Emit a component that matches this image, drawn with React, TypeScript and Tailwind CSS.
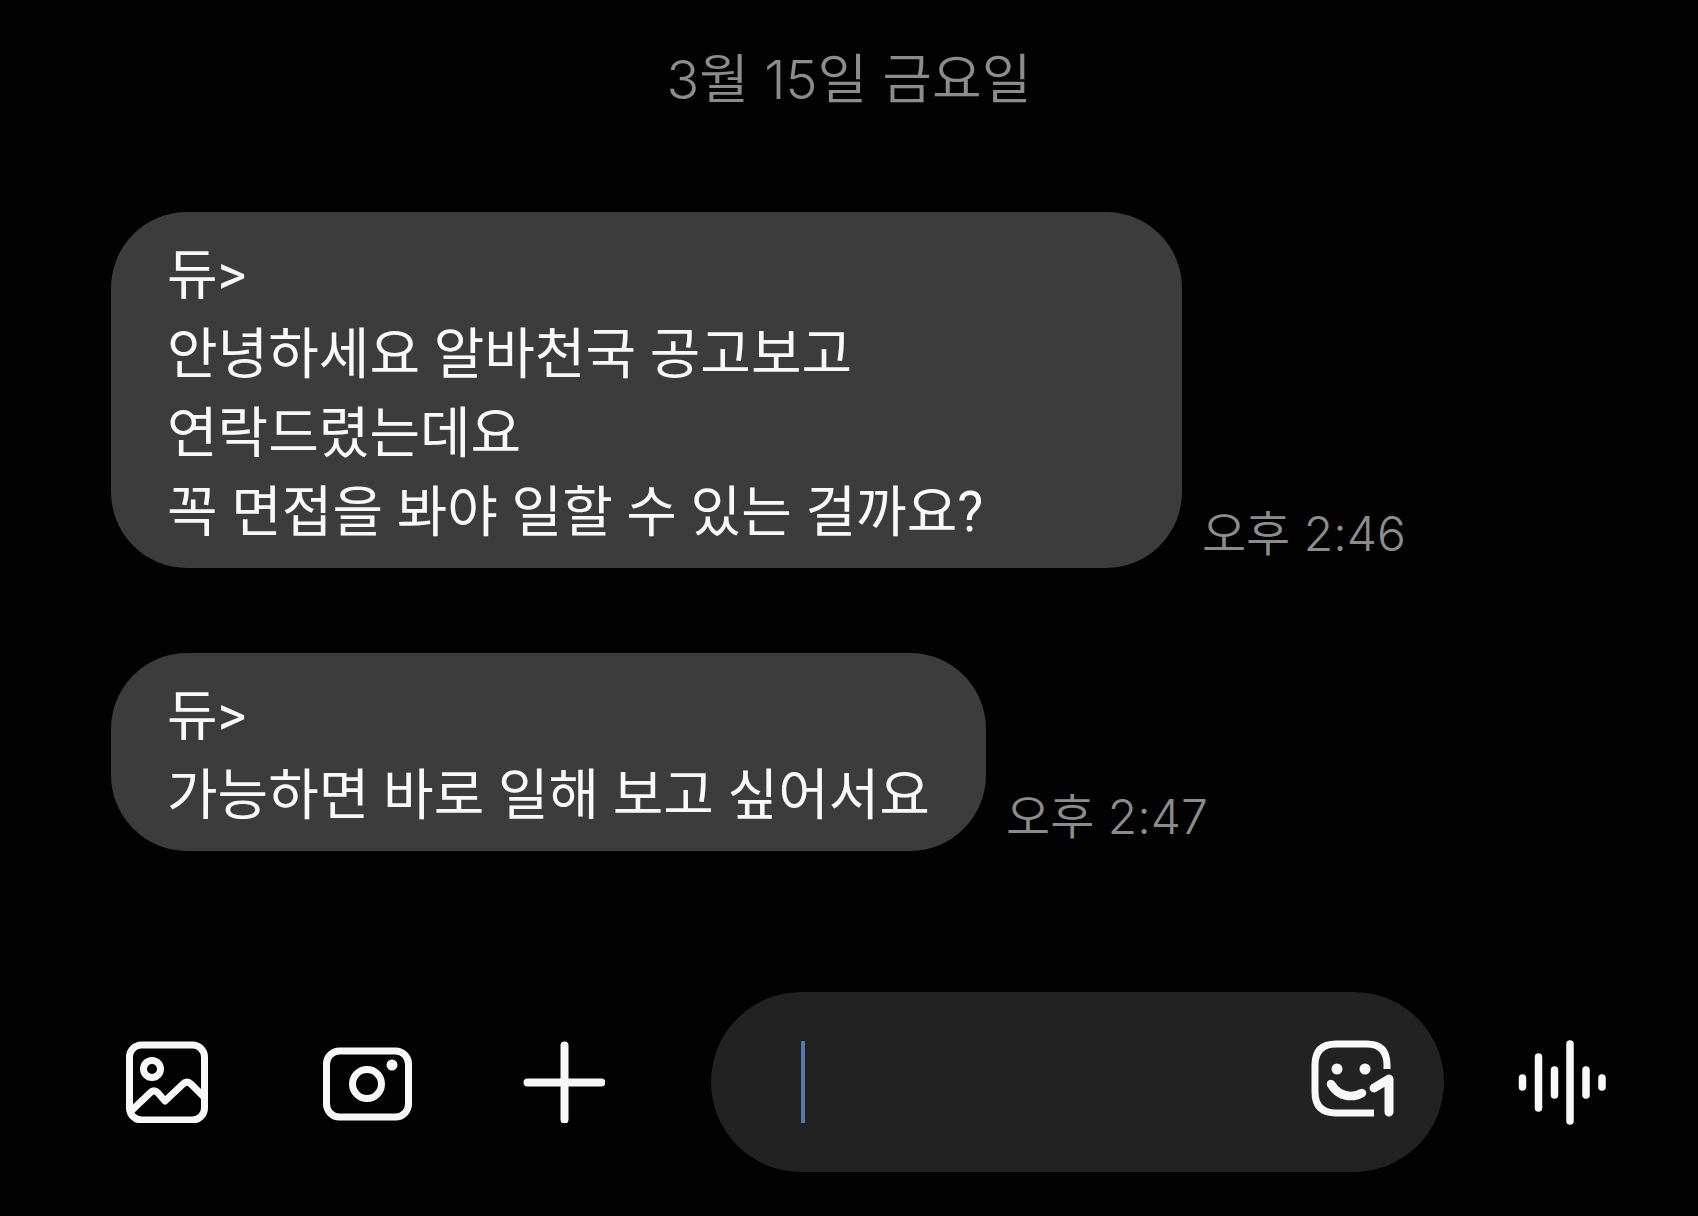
import { useState } from "react";

interface Message {
  id: number;
  lines: string[];
  time: string;
  bubbleClass: string;
}

const messages: Message[] = [
  {
    id: 1,
    lines: [
      "듀>",
      "안녕하세요 알바천국 공고보고",
      "연락드렸는데요",
      "꼭 면접을 봐야 일할 수 있는 걸까요?",
    ],
    time: "오후 2:46",
    bubbleClass: "w-[73%]",
  },
  {
    id: 2,
    lines: ["듀>", "가능하면 바로 일해 보고 싶어서요"],
    time: "오후 2:47",
    bubbleClass: "w-fit",
  },
];

function GalleryIcon() {
  return (
    <svg width="82" height="82" viewBox="0 0 82 82" fill="none" stroke="currentColor" strokeWidth="7">
      <rect x="3.5" y="4" width="75" height="75" rx="12" />
      <circle cx="26" cy="28" r="8.5" />
      <path d="M4 71 24 52q4-4 8 0l7 8 18-17q4-4 8 0l14 14" strokeLinejoin="round" />
    </svg>
  );
}

function CameraIcon() {
  return (
    <svg width="90" height="82" viewBox="0 0 90 82" fill="none" stroke="currentColor" strokeWidth="7">
      <rect x="4.5" y="10" width="82" height="66" rx="13" />
      <circle cx="45" cy="43" r="14.5" />
      <circle cx="70" cy="24" r="5.5" fill="currentColor" stroke="none" />
    </svg>
  );
}

function PlusIcon() {
  return (
    <svg width="82" height="82" viewBox="0 0 82 82" fill="none" stroke="currentColor" strokeWidth="8" strokeLinecap="round">
      <path d="M41.5 4.5v74M4.5 41.5h74" />
    </svg>
  );
}

function StickerIcon() {
  return (
    <svg
      width="84"
      height="82"
      viewBox="0 0 84 82"
      className="overflow-visible"
      fill="none"
      stroke="currentColor"
      strokeWidth="7"
      strokeLinecap="round"
      strokeLinejoin="round"
    >
      <path d="M75 28V24Q75 3 55 3H24Q3 3 3 24V51Q3 72 24 72H62" strokeLinecap="butt" />
      <circle cx="25" cy="28" r="5.5" fill="currentColor" stroke="none" />
      <circle cx="53" cy="28" r="5.5" fill="currentColor" stroke="none" />
      <path d="M19 43q7 12 20 12 6 0 11-3" strokeWidth="8.5" />
      <path d="M62 47l15-9v33" strokeWidth="9" />
    </svg>
  );
}

function VoiceIcon() {
  return (
    <svg width="90" height="86" viewBox="0 0 90 86" fill="none" stroke="currentColor" strokeWidth="7.5" strokeLinecap="round">
      <path d="M4.5 39v9M20.5 18v51M36.5 31v25M52 5v77M68 31v25M84 39v9" />
    </svg>
  );
}

function MessageRow({ message }: { message: Message }) {
  return (
    <li className="flex items-end gap-5">
      <div
        className={`rounded-[76px] bg-[#3c3c3c] px-14 pt-6 pb-4 font-['Roboto','Noto_Sans_CJK_KR',sans-serif] text-[55px] leading-[79px] text-[#f8f8f8] ${message.bubbleClass}`}
      >
        {message.lines.map((line) => (
          <p key={line}>{line}</p>
        ))}
      </div>
      <time className="text-5xl leading-[68px] font-[350] whitespace-nowrap text-[#8c8c8c]">
        {message.time}
      </time>
    </li>
  );
}

export default function App() {
  const [text, setText] = useState("");

  return (
    <main
      lang="ko"
      className="flex min-h-screen flex-col bg-[#020202] font-['Inter','Noto_Sans_CJK_KR',sans-serif]"
    >
      <h1 className="pt-10 text-center text-[54px] leading-[80px] font-[350] text-[#8c8c8c]">
        3월 15일 금요일
      </h1>

      <ul className="mt-[92px] flex flex-col gap-[85px] pr-[120px] pl-[111px]">
        {messages.map((message) => (
          <MessageRow key={message.id} message={message} />
        ))}
      </ul>

      <form
        className="mt-auto flex items-center pr-[90px] pb-11 pl-[126px] text-[#f8f8f8]"
        onSubmit={(e) => e.preventDefault()}
      >
        <button type="button" aria-label="갤러리">
          <GalleryIcon />
        </button>
        <button type="button" aria-label="카메라" className="ml-[114px]">
          <CameraIcon />
        </button>
        <button type="button" aria-label="추가" className="ml-[111px]">
          <PlusIcon />
        </button>
        <div className="ml-[106px] flex h-[180px] min-w-0 flex-1 items-center rounded-full bg-[#222222] pr-12 pl-[90px]">
          <span className="h-[82px] w-1 shrink-0 bg-[#5478ae]" />
          <input
            type="text"
            aria-label="메시지 입력"
            value={text}
            onChange={(e) => setText(e.target.value)}
            className="min-w-0 flex-1 bg-transparent text-[55px] outline-none"
          />
          <button type="button" aria-label="스티커">
            <StickerIcon />
          </button>
        </div>
        <button type="button" aria-label="음성 입력" className="ml-[74px]">
          <VoiceIcon />
        </button>
      </form>
    </main>
  );
}
